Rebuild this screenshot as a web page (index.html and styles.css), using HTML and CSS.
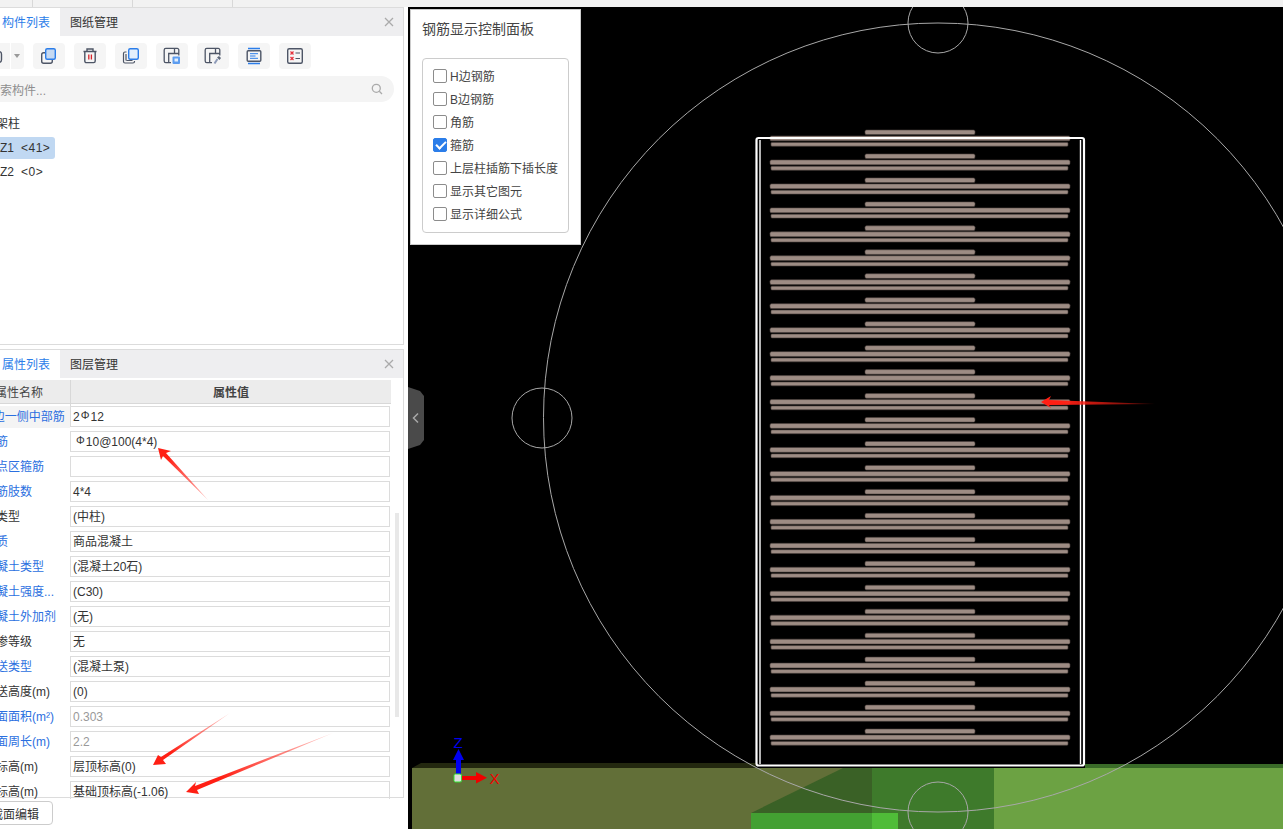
FILE: index.html
```html
<!DOCTYPE html>
<html lang="zh-CN">
<head>
    <meta charset="UTF-8">
    <meta name="viewport" content="width=device-width, initial-scale=1.0">
    <title>钢筋显示控制面板</title>
    <link rel="stylesheet" href="styles.css">
</head>
<body>
    <div class="top-strip">
        <span class="strip-cell"></span>
        <span class="strip-cell"></span>
        <span class="strip-cell"></span>
    </div>

    <div class="workspace">
        <div class="side">
            <div class="side-inner">
                <section class="panel panel-list">
                    <div class="tab-bar">
                        <span class="tab active">构件列表</span>
                        <span class="tab">图纸管理</span>
                        <svg class="close-icon" width="10" height="10" viewBox="0 0 10 10"><path d="M1 1L9 9M9 1L1 9"/></svg>
                    </div>

                    <div class="toolbar">
                        <div class="split-btn">
                            <span class="split-main">
                                <svg width="19" height="26" viewBox="0 0 19 26"><rect x="-1" y="8.7" width="10.5" height="10.6" rx="2.5" fill="none" stroke="#4d5566" stroke-width="1.4"/></svg>
                            </span>
                            <span class="split-arrow"></span>
                        </div>
                        <button class="tool-btn">
                            <svg width="32" height="26" viewBox="0 0 32 26"><rect x="8.7" y="9.7" width="10.6" height="10.6" rx="2" fill="none" stroke="#4d5566" stroke-width="1.4"/><rect x="12.7" y="5.7" width="9.6" height="10.6" rx="1.5" fill="#c5d9f2" stroke="#2b7de9" stroke-width="1.4"/></svg>
                        </button>
                        <button class="tool-btn">
                            <svg width="32" height="26" viewBox="0 0 32 26"><path d="M9.5 8.5h13M13 8.5V6h6v2.5M10.8 8.5V18a1.6 1.6 0 0 0 1.6 1.6h7.2a1.6 1.6 0 0 0 1.6-1.6V8.5" fill="none" stroke="#4d5566" stroke-width="1.4"/><path d="M14.8 11.5v5M17.4 11.5v5" stroke="#d8232a" stroke-width="1.3"/></svg>
                        </button>
                        <button class="tool-btn">
                            <svg width="32" height="26" viewBox="0 0 32 26"><path d="M11.5 9H10a1.5 1.5 0 0 0-1.5 1.5v8A1.5 1.5 0 0 0 10 20h8a1.5 1.5 0 0 0 1.5-1.5V18" fill="none" stroke="#4d5566" stroke-width="1.2"/><path d="M11 17.5V11M11.5 17.5h6" fill="none" stroke="#4d5566" stroke-width="1.2"/><rect x="13.7" y="5.7" width="9.6" height="10.6" rx="1.5" fill="#e3effc" stroke="#2b7de9" stroke-width="1.4"/></svg>
                        </button>
                        <button class="tool-btn">
                            <svg width="32" height="26" viewBox="0 0 32 26"><path d="M15 19.6h-5.2a1.6 1.6 0 0 1-1.6-1.6V7a1.6 1.6 0 0 1 1.6-1.6h11.4A1.6 1.6 0 0 1 22.8 7v5.5M12.7 19.5V10.5H22.7M18.5 6v4" fill="none" stroke="#4d5566" stroke-width="1.3"/><rect x="16.5" y="13.5" width="7.5" height="7.5" rx="1" fill="#5d9df0"/><rect x="18.5" y="15.5" width="3.5" height="3" fill="#e3effc"/></svg>
                        </button>
                        <button class="tool-btn">
                            <svg width="32" height="26" viewBox="0 0 32 26"><path d="M15 19.6h-5.2a1.6 1.6 0 0 1-1.6-1.6V7a1.6 1.6 0 0 1 1.6-1.6h11.4A1.6 1.6 0 0 1 22.8 7v5.5M12.7 19.5V10.5H22.7M18.5 6v4" fill="none" stroke="#4d5566" stroke-width="1.3"/><path d="M17.5 20.5L20.5 16" stroke="#8d9ab8" stroke-width="2"/><path d="M20 14.5l2.5 2.5 1.5-2-2-2z" fill="#5c6678"/></svg>
                        </button>
                        <button class="tool-btn">
                            <svg width="32" height="26" viewBox="0 0 32 26"><path d="M10 5.5h12M10 20.5h12" stroke="#2b7de9" stroke-width="1.4"/><rect x="9.2" y="7.7" width="13.6" height="10.6" rx="1" fill="none" stroke="#4d5566" stroke-width="1.4"/><path d="M12 10.7h8M12 13h5.5M12 15.300h8" stroke="#2b7de9"/></svg>
                        </button>
                        <button class="tool-btn">
                            <svg width="32" height="26" viewBox="0 0 32 26"><rect x="8.7" y="5.7" width="14.600" height="14.600" rx="1.5" fill="none" stroke="#4d5566" stroke-width="1.4"/><path d="M11.5 8.5l3 3M14.5 8.5l-3 3M11.5 14l3 3M14.5 14l-3 3" stroke="#e6303a" stroke-width="1.2"/><path d="M16.5 10h4.5M16.5 15.5h4.5" stroke="#4d5566" stroke-width="1.2"/></svg>
                        </button>
                    </div>

                    <div class="search-box">
                        <span class="search-text">搜索构件...</span>
                        <svg width="12" height="12" viewBox="0 0 12 12"><circle cx="5.3" cy="5.3" r="4" fill="none" stroke="#aaa" stroke-width="1.3"/><path d="M8.3 8.3L11 11" stroke="#aaa" stroke-width="1.3"/></svg>
                    </div>

                    <div class="tree">
                        <div class="tree-group">框架柱</div>
                        <div class="tree-node selected">KZ1<span class="count">&lt;41&gt;</span></div>
                        <div class="tree-node">KZ2<span class="count">&lt;0&gt;</span></div>
                    </div>
                </section>

                <section class="panel panel-props">
                    <div class="tab-bar">
                        <span class="tab active">属性列表</span>
                        <span class="tab">图层管理</span>
                        <svg class="close-icon" width="10" height="10" viewBox="0 0 10 10"><path d="M1 1L9 9M9 1L1 9"/></svg>
                    </div>

                    <div class="prop-table">
                        <div class="prop-head">
                            <span>属性名称</span>
                            <span>属性值</span>
                        </div>
                        <div class="prop-row first">
                            <span class="prop-name link">H边一侧中部筋</span>
                            <span class="prop-value">2<span class="bar-mark">Φ</span>12</span>
                        </div>
                        <div class="prop-row">
                            <span class="prop-name link">箍筋</span>
                            <span class="prop-value"><span class="bar-mark lead">Φ</span>10@100(4*4)</span>
                        </div>
                        <div class="prop-row">
                            <span class="prop-name link">节点区箍筋</span>
                            <span class="prop-value"></span>
                        </div>
                        <div class="prop-row">
                            <span class="prop-name link">箍筋肢数</span>
                            <span class="prop-value">4*4</span>
                        </div>
                        <div class="prop-row">
                            <span class="prop-name">柱类型</span>
                            <span class="prop-value">(中柱)</span>
                        </div>
                        <div class="prop-row">
                            <span class="prop-name link">材质</span>
                            <span class="prop-value">商品混凝土</span>
                        </div>
                        <div class="prop-row">
                            <span class="prop-name link">混凝土类型</span>
                            <span class="prop-value">(混凝土20石)</span>
                        </div>
                        <div class="prop-row">
                            <span class="prop-name link">混凝土强度...</span>
                            <span class="prop-value">(C30)</span>
                        </div>
                        <div class="prop-row">
                            <span class="prop-name link">混凝土外加剂</span>
                            <span class="prop-value">(无)</span>
                        </div>
                        <div class="prop-row">
                            <span class="prop-name">抗渗等级</span>
                            <span class="prop-value">无</span>
                        </div>
                        <div class="prop-row">
                            <span class="prop-name link">泵送类型</span>
                            <span class="prop-value">(混凝土泵)</span>
                        </div>
                        <div class="prop-row">
                            <span class="prop-name">泵送高度(m)</span>
                            <span class="prop-value">(0)</span>
                        </div>
                        <div class="prop-row">
                            <span class="prop-name link">截面面积(m²)</span>
                            <span class="prop-value muted">0.303</span>
                        </div>
                        <div class="prop-row">
                            <span class="prop-name link">截面周长(m)</span>
                            <span class="prop-value muted">2.2</span>
                        </div>
                        <div class="prop-row">
                            <span class="prop-name">顶标高(m)</span>
                            <span class="prop-value">层顶标高(0)</span>
                        </div>
                        <div class="prop-row">
                            <span class="prop-name">底标高(m)</span>
                            <span class="prop-value">基础顶标高(-1.06)</span>
                        </div>
                        <span class="scroll-thumb"></span>
                    </div>
                </section>

                <button class="edit-btn">截面编辑</button>
            </div>
        </div>

        <div class="viewport">
            <svg class="scene" width="875" height="822" viewBox="408 7 875 822">
                <defs>
                    <g id="rebar-set" fill="#9d8c84" stroke="#4a403c" stroke-width="0.6">
                        <rect x="865" y="130" width="110" height="4.6" rx="1.5"/>
                        <rect x="770" y="136" width="300" height="4.8" rx="1.5"/>
                        <rect x="771" y="142.400" width="297" height="3.8" rx="1"/>
                    </g>
                </defs>

                <!-- ground -->
                <polygon points="412,768 421,763 756,763 756,768" fill="#23280f"/>
                <rect x="1085" y="764" width="198" height="4" fill="#3a6b28"/>
                <rect x="412" y="768" width="460" height="61" fill="#626f38"/>
                <polygon points="751,813 843,768 872,768 872,813" fill="#3a6126"/>
                <rect x="872" y="768" width="122" height="61" fill="#3e7a2b"/>
                <rect x="994" y="768" width="289" height="61" fill="#6ca243"/>
                <rect x="751" y="813" width="121" height="16" fill="#43a032"/>
                <rect x="872" y="813" width="26" height="16" fill="#4fbc38"/>

                <!-- outline circles -->
                <g fill="none" stroke="#a8a8a8" stroke-width="1">
                    <circle cx="938" cy="417.5" r="394.5"/>
                    <circle cx="938" cy="23" r="30"/>
                    <circle cx="542" cy="418" r="30"/>
                    <circle cx="938" cy="812" r="30"/>
                </g>

                <!-- stirrups -->
                <use href="#rebar-set" y="0"/>
                <use href="#rebar-set" y="23.96"/>
                <use href="#rebar-set" y="47.92"/>
                <use href="#rebar-set" y="71.88"/>
                <use href="#rebar-set" y="95.84"/>
                <use href="#rebar-set" y="119.8"/>
                <use href="#rebar-set" y="143.76"/>
                <use href="#rebar-set" y="167.72"/>
                <use href="#rebar-set" y="191.68"/>
                <use href="#rebar-set" y="215.64"/>
                <use href="#rebar-set" y="239.6"/>
                <use href="#rebar-set" y="263.56"/>
                <use href="#rebar-set" y="287.52"/>
                <use href="#rebar-set" y="311.48"/>
                <use href="#rebar-set" y="335.44"/>
                <use href="#rebar-set" y="359.4"/>
                <use href="#rebar-set" y="383.36"/>
                <use href="#rebar-set" y="407.32"/>
                <use href="#rebar-set" y="431.28"/>
                <use href="#rebar-set" y="455.24"/>
                <use href="#rebar-set" y="479.2"/>
                <use href="#rebar-set" y="503.16"/>
                <use href="#rebar-set" y="527.12"/>
                <use href="#rebar-set" y="551.08"/>
                <use href="#rebar-set" y="575.04"/>
                <use href="#rebar-set" y="599"/>

                <!-- column outline -->
                <rect x="756.5" y="138" width="327.5" height="627.5" rx="2" fill="none" stroke="#fff" stroke-width="2.2"/>
                <path d="M760 140V764M1080.5 140V764" stroke="#fff" stroke-width="1.4"/>

                <!-- axis -->
                <path d="M456 775V760H453L458.5 749L464 760H461V775Z" fill="#0000f0"/>
                <path d="M461 776H476V772L487 777.8L476 783.5V780H461Z" fill="#f00000"/>
                <rect x="454" y="774" width="7.5" height="8" rx="1.5" fill="#ddd" stroke="#2ee62e" stroke-width="1"/>
                <text x="453.5" y="748" class="axis-z">Z</text>
                <text x="489.5" y="784" class="axis-x">X</text>
            </svg>

            <div class="rebar-panel">
                <div class="rebar-title">钢筋显示控制面板</div>
                <div class="rebar-box">
                    <label class="rebar-item"><input type="checkbox">H边钢筋</label>
                    <label class="rebar-item"><input type="checkbox">B边钢筋</label>
                    <label class="rebar-item"><input type="checkbox">角筋</label>
                    <label class="rebar-item"><input type="checkbox" checked>箍筋</label>
                    <label class="rebar-item"><input type="checkbox">上层柱插筋下插长度</label>
                    <label class="rebar-item"><input type="checkbox">显示其它图元</label>
                    <label class="rebar-item"><input type="checkbox">显示详细公式</label>
                </div>
            </div>

            <div class="collapse-handle">
                <svg width="8" height="12" viewBox="0 0 8 12"><path d="M6 1.5L1.5 6L6 10.5" fill="none" stroke="#a8a8a8" stroke-width="1.5"/></svg>
            </div>
        </div>
    </div>

    <!-- red markup arrows drawn over the screenshot -->
    <svg class="markup" width="1283" height="829" viewBox="0 0 1283 829">
        <defs>
            <linearGradient id="fade-a" gradientUnits="userSpaceOnUse" x1="1060" y1="402" x2="1155" y2="404">
                <stop offset="0" stop-color="#ff1f14"/><stop offset="1" stop-color="#ff1f14" stop-opacity="0.3"/>
            </linearGradient>
            <linearGradient id="fade-b" gradientUnits="userSpaceOnUse" x1="170" y1="456" x2="208" y2="500">
                <stop offset="0" stop-color="#ff1f14"/><stop offset="1" stop-color="#ff1f14" stop-opacity="0.3"/>
            </linearGradient>
            <linearGradient id="fade-c" gradientUnits="userSpaceOnUse" x1="170" y1="752" x2="230" y2="713">
                <stop offset="0" stop-color="#ff1f14"/><stop offset="1" stop-color="#ff1f14" stop-opacity="0.2"/>
            </linearGradient>
            <linearGradient id="fade-d" gradientUnits="userSpaceOnUse" x1="220" y1="776" x2="333" y2="733">
                <stop offset="0" stop-color="#ff1f14"/><stop offset="1" stop-color="#ff1f14" stop-opacity="0.2"/>
            </linearGradient>
        </defs>
        <polygon points="1041,402 1051,396 1049,400 1155,404 1049,405 1051,408" fill="url(#fade-a)"/>
        <polygon points="158,448 171,451 166,453 208,500 163,456 161,460" fill="url(#fade-b)"/>
        <polygon points="153,765 158,755 161,757 230,713 163,760 166,764" fill="url(#fade-c)"/>
        <polygon points="186,792 196,782 195,786 333,733 197,790 199,794" fill="url(#fade-d)"/>
    </svg>
</body>
</html>
```

FILE: styles.css
```css
* {
    box-sizing: border-box;
}
html, body {
    height: 100%;
}
body {
    margin: 0;
    position: relative;
    overflow: hidden;
    background-color: #fff;
    color: #333;
    font-family: "Liberation Sans", "Noto Sans CJK SC", sans-serif;
    font-size: 12px;
}
.top-strip {
    display: flex;
    height: 7px;
    padding-left: 32px;
    background-color: #f2f2f2;
}
.strip-cell {
    width: 100px;
    border-left: 1px solid #d8d8d8;
}
.workspace {
    display: flex;
    height: 822px;
}

/* left column, its first 32px run off the window */
.side {
    width: 408px;
    flex-shrink: 0;
    overflow: hidden;
}
.side-inner {
    width: 436px;
    margin-left: -32px;
}
.panel {
    border: 1px solid #dcdcdc;
    border-left: none;
}
.panel-list {
    height: 338px;
    margin-bottom: 4px;
}
.panel-props {
    height: 449px;
}
.tab-bar {
    display: flex;
    align-items: center;
    height: 28px;
    padding-left: 24px;
    padding-right: 9px;
    background-color: #eeeef0;
}
.tab {
    height: 100%;
    padding: 0 10px;
    line-height: 30px;
}
.tab.active {
    background-color: #fff;
    color: #2b7de9;
}
.close-icon {
    margin-left: auto;
}
.close-icon path {
    stroke: #aaa;
    stroke-width: 1.3;
}

/* toolbar */
.toolbar {
    display: flex;
    gap: 9px;
    margin-top: 7px;
    padding-left: 24px;
}
.split-btn {
    display: flex;
    width: 32px;
    height: 26px;
    border-radius: 4px;
    background-color: #f5f5f5;
}
.split-main {
    width: 19px;
    border-right: 1px solid #fff;
    overflow: hidden;
}
.split-main svg {
    display: block;
}
.split-arrow {
    width: 0;
    height: 0;
    margin: 11px 0 0 3px;
    border: 3.5px solid transparent;
    border-top: 4px solid #999;
}
.tool-btn {
    width: 32px;
    height: 26px;
    padding: 0;
    border: none;
    border-radius: 4px;
    background-color: #f5f5f5;
}
.tool-btn svg {
    display: block;
}

.search-box {
    display: flex;
    align-items: center;
    justify-content: space-between;
    height: 26px;
    margin: 7px 9px 0 8px;
    padding: 0 11px 0 12px;
    border-radius: 13px;
    background-color: #f4f4f4;
}
.search-text {
    color: #8e8e8e;
}

.tree {
    margin-top: 11px;
}
.tree-group {
    height: 22px;
    margin-bottom: 2px;
    padding-left: 16px;
    line-height: 22px;
}
.tree-node {
    width: fit-content;
    height: 22px;
    margin-bottom: 2px;
    margin-left: 8px;
    padding: 0 5px 0 16px;
    border-radius: 3px;
    line-height: 22px;
}
.tree-node.selected {
    background-color: #c0d8f2;
}
.count {
    margin-left: 7px;
    letter-spacing: 0.5px;
}

/* property table */
.prop-table {
    position: relative;
    height: 419px;
    margin-top: 2px;
    overflow: hidden;
}
.prop-head {
    display: grid;
    grid-template-columns: 102px 321px;
    width: 423px;
    height: 24px;
    border-bottom: 1px solid #d8d8d8;
    background-color: #ececec;
    color: #444;
    text-align: center;
    line-height: 26px;
}
.prop-head span + span {
    border-left: 1px solid #d8d8d8;
    font-weight: bold;
}
.prop-row {
    display: grid;
    grid-template-columns: 102px 320px;
    height: 25px;
}
.prop-row.first {
    margin-top: 2px;
}
.prop-row.first .prop-name {
    background-color: #f4f4f4;
}
.prop-name {
    height: 22px;
    padding-left: 16px;
    line-height: 23px;
    white-space: nowrap;
    overflow: hidden;
}
.prop-name.link {
    color: #2b6fe0;
}
.prop-value {
    height: 21px;
    padding-left: 2px;
    border: 1px solid #dcdcdc;
    line-height: 21px;
}
.prop-value.muted {
    color: #999;
}
.bar-mark {
    position: relative;
    top: -2px;
    margin: 0 1px;
    font-size: 11px;
}
.bar-mark.lead {
    margin-left: 3px;
}
.scroll-thumb {
    position: absolute;
    left: 427px;
    top: 133px;
    width: 4px;
    height: 204px;
    background-color: #e8e8e8;
}
.edit-btn {
    display: block;
    height: 24px;
    margin: 3px 0 0 10px;
    padding: 0 13px 0 12px;
    border: 1px solid #ccc;
    border-radius: 4px;
    background-color: #fff;
    color: #333;
    font: inherit;
}

/* 3d view */
.viewport {
    position: relative;
    flex: 1;
    overflow: hidden;
    background-color: #000;
}
.scene {
    display: block;
}
.axis-z, .axis-x {
    font-family: "Liberation Sans", sans-serif;
    font-size: 15px;
}
.axis-z {
    fill: #0000f0;
}
.axis-x {
    fill: #f00000;
}
.rebar-panel {
    position: absolute;
    left: 2px;
    top: 2px;
    width: 171px;
    height: 236px;
    padding: 11px 11px;
    border: 1px solid #ccc;
    background-color: #fff;
    color: #444;
}
.rebar-title {
    font-size: 14px;
    line-height: 17px;
}
.rebar-box {
    display: flex;
    flex-direction: column;
    width: 147px;
    height: 175px;
    margin-top: 20px;
    padding: 5px 10px;
    border: 1px solid #ccc;
    border-radius: 4px;
}
.rebar-item {
    display: flex;
    align-items: center;
    height: 23px;
    white-space: nowrap;
}
.rebar-item input {
    position: relative;
    appearance: none;
    width: 14px;
    height: 14px;
    margin: 0 3px 0 0;
    flex-shrink: 0;
    border: 1px solid #8c8c8c;
    border-radius: 2px;
    background-color: #fff;
}
.rebar-item input:checked {
    border-color: #2b7de9;
    background-color: #2b7de9;
}
.rebar-item input:checked::after {
    content: "";
    position: absolute;
    left: 3.5px;
    top: 0.5px;
    width: 4px;
    height: 8px;
    border: solid #fff;
    border-width: 0 2px 2px 0;
    transform: rotate(45deg);
}
.collapse-handle {
    position: absolute;
    left: 0;
    top: 380px;
    display: flex;
    align-items: center;
    justify-content: center;
    width: 16px;
    height: 62px;
    background-color: #4a4a4a;
    clip-path: polygon(0 0, 12px 4px, 16px 9px, 16px 53px, 12px 58px, 0 100%);
}
.markup {
    position: absolute;
    left: 0;
    top: 0;
    pointer-events: none;
}
```
